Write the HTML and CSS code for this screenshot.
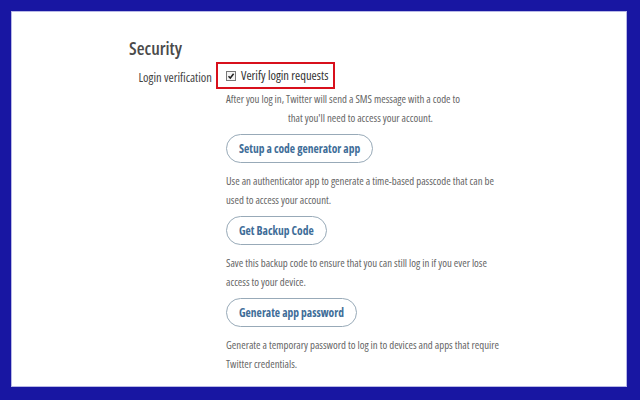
FILE: index.html
```html
<!DOCTYPE html>
<html lang="en">
<head>
<meta charset="utf-8">
<title>Security</title>
<link rel="stylesheet" href="styles.css">
</head>
<body>
<main class="panel">
  <section class="settings">
    <h2 class="title">Security</h2>
    <div class="row">
      <div class="label">Login verification</div>
      <div class="control">
        <label class="verify">
          <span class="checkbox"><svg viewBox="0 0 8 8" width="8" height="8"><path d="M1.5 4.2 L3.3 6 L6.6 1.8" fill="none" stroke="#222" stroke-width="1.5"/></svg></span>
          <span>Verify login requests</span>
        </label>
        <p class="desc">After you log in, Twitter will send a SMS message with a code to<br><span class="gap"></span>that you'll need to access your account.</p>
        <button class="btn">Setup a code generator app</button>
        <p class="desc">Use an authenticator app to generate a time-based passcode that can be<br>used to access your account.</p>
        <button class="btn">Get Backup Code</button>
        <p class="desc">Save this backup code to ensure that you can still log in if you ever lose<br>access to your device.</p>
        <button class="btn">Generate app password</button>
        <p class="desc">Generate a temporary password to log in to devices and apps that require<br>Twitter credentials.</p>
      </div>
    </div>
  </section>
</main>
</body>
</html>
```
FILE: styles.css
```css
html, body {
  margin: 0;
  padding: 0;
}
body {
  width: 640px;
  height: 400px;
  background: #1816a2;
  padding: 12px;
  box-sizing: border-box;
  font-family: "Open Sans", sans-serif;
  font-stretch: 75%;
}
.panel {
  width: 614px;
  height: 374px;
  background: #ffffff;
  box-shadow: 0 0 0 1px #b8b8e6;
}
.settings {
  padding: 26px 0 0 117px;
}
.title {
  margin: 0;
  font-size: 18px;
  line-height: 20px;
  font-weight: 600;
  color: #4a4a4a;
}
.row {
  display: grid;
  grid-template-columns: 97px 1fr;
  margin-top: 4px;
}
.label {
  text-align: right;
  padding-right: 14px;
  white-space: nowrap;
  font-size: 12.5px;
  color: #444;
  line-height: 27px;
  padding-top: 2px;
}
.control {
  display: flex;
  flex-direction: column;
  align-items: flex-start;
}
.verify {
  display: inline-flex;
  align-items: center;
  gap: 5px;
  height: 23px;
  width: 107px;
  margin-left: -10px;
  padding-left: 8px;
  white-space: nowrap;
  border: 2px solid #d8101c;
  font-size: 12.5px;
  color: #333;
}
.checkbox {
  display: inline-flex;
  align-items: center;
  justify-content: center;
  width: 8px;
  height: 8px;
  border: 1px solid #777;
  background: #f4f4f4;
}
.checkbox svg {
  display: block;
}
.desc {
  margin: 0;
  font-size: 10.8px;
  line-height: 19px;
  color: #666;
  white-space: nowrap;
}
.gap {
  display: inline-block;
  width: 62px;
}
.btn {
  margin: 7px 0 8px;
  height: 29px;
  padding: 0 12px;
  border: 1px solid #98aab8;
  border-radius: 15px;
  background: #fff;
  color: #3e6d98;
  font-family: inherit;
  font-stretch: inherit;
  font-size: 11.5px;
  font-weight: bold;
}
```
